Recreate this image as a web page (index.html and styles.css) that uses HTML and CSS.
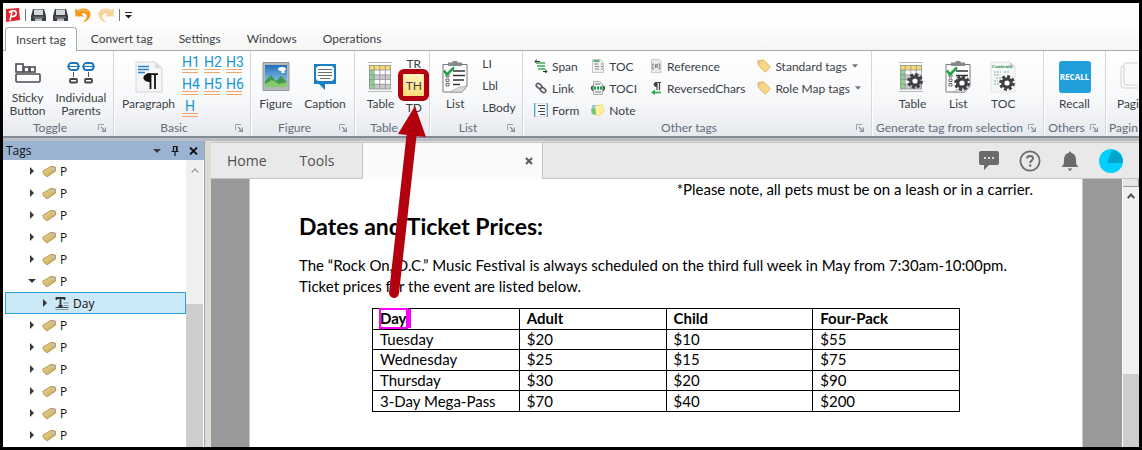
FILE: index.html
```
<!DOCTYPE html>
<html lang="en">
<head>
  <meta charset="UTF-8" />
  <meta name="viewport" content="width=device-width, initial-scale=1.0"/>
  <title>Tags</title>
  <link rel="stylesheet" href="styles.css">
</head>
<body>
  <!-- shared icons -->
  <svg class="defs" aria-hidden="true">
    <linearGradient id="goldFill" x1="0" y1="0" x2="1" y2="1">
      <stop offset="0" stop-color="#ecd79a"/><stop offset="1" stop-color="#c9a54c"/>
    </linearGradient>
    <linearGradient id="skyFill" x1="0" y1="0" x2="0" y2="1">
      <stop offset="0" stop-color="#1e6fb8"/><stop offset="1" stop-color="#a8dcf0"/>
    </linearGradient>
    <symbol id="launcher" viewBox="0 0 8 8">
      <path d="M.5 6V.5H6" fill="none" stroke="#9aa0a8"/>
      <path d="M3 3l4 4M7.5 3.5v4h-4" fill="none" stroke="#8a9098" stroke-width="1.3"/>
    </symbol>
    <symbol id="save" viewBox="0 0 15 14">
      <path d="M2 1h11l2 7v5H0V8z" fill="#3a3d40"/>
      <path d="M3 1.500h9V7H3z" fill="#d4d8dc"/>
      <path d="M2 8.500h11v1.500H2z" fill="#6b7074"/>
      <path d="M4 10.500h7V13H4z" fill="#b9bdc1"/>
    </symbol>
    <symbol id="undo" viewBox="0 0 16 15">
      <path d="M0 .5l2.500 1.700C6-.3 11-.2 14 2.500c4 5-.5 11-6.500 12 3.500-3 5.500-5.500 3.500-8C9.500 5 8 5 6.500 6L9 8.500H.5z" fill="#f39a1d"/>
      <path d="M3 3.500C6 1.500 10 1.500 12.500 4" fill="none" stroke="#fbc46a"/>
    </symbol>
    <symbol id="tag" viewBox="0 0 16 13">
      <path d="M.8 6.200L9.500 1l4.500.8.5 4.200-9 6.200L1.800 9.500z" fill="url(#goldFill)" stroke="#a3823c" stroke-width=".8"/>
      <circle cx="12" cy="3.800" r="1.300" fill="#fff" stroke="#777" stroke-width=".5"/>
      <path d="M12.200 3.600L15.500.5" stroke="#b5aaa5" stroke-width=".8"/>
    </symbol>
    <symbol id="tag2" viewBox="0 0 13 13">
      <path d="M.7 1.800L6 .7l6.300 6.500-4.500 5.100L1.500 6.500z" fill="#fbd785" stroke="#d9ae57" stroke-width=".8"/>
      <circle cx="3.300" cy="3.200" r="1" fill="#fff" stroke="#b88d3a" stroke-width=".5"/>
    </symbol>
    <symbol id="grid" viewBox="0 0 24 30">
      <path d="M0 .5h24M0 29.500h24" stroke="#b8babd"/>
      <path d="M1 3h22v24H1z" fill="#fff"/>
      <path d="M1 3h22v5H1z" fill="#f8da74"/>
      <path d="M1 8h5v19H1z" fill="#8fd192"/>
      <path d="M6 13h17v4H6zM6 22h17v5H6z" fill="#c8cacc"/>
      <path d="M1 3.500h22M1 8h22M1 12.800h22M1 17.500h22M1 22.300h22M1 27h22M1.500 3v24M6.200 3v24M11.800 3v24M17.300 3v24M22.500 3v24" stroke="#8f9296" fill="none" stroke-width=".8"/>
    </symbol>
    <symbol id="checklist" viewBox="0 0 26 32">
      <path d="M1 3.500h24V25l-5 6H1z" fill="#fff" stroke="#77797c"/>
      <path d="M25 25l-9 1.500L8 31h12z" fill="#d6d8da" stroke="#999" stroke-width=".6"/>
      <path d="M6 1.500h4L11 0h4l1 1.500h4V5H6z" fill="#85888c"/>
      <path d="M11 10h12M11 14.500h12M11 19h11M11 23.500h7" stroke="#33373b" stroke-width="1.400"/>
      <path d="M4 13.500h3v2.500H4zM4 18h3v2.500H4zM4 22.500h3V25H4z" fill="#fff" stroke="#444" stroke-width=".8"/>
      <path d="M2 9.500l3 4 7-7" fill="none" stroke="#24a148" stroke-width="2.600"/>
    </symbol>
    <symbol id="gear" viewBox="0 0 16 16">
      <circle cx="8" cy="8" r="6.600" fill="none" stroke="#3d3f42" stroke-width="2.600" stroke-dasharray="3 2.180"/>
      <circle cx="8" cy="8" r="4.200" fill="#fff" stroke="#3d3f42" stroke-width="3.200"/>
    </symbol>
    <symbol id="caret" viewBox="0 0 7 4"><path d="M0 0h7L3.500 4z" fill="#6f747a"/></symbol>
    <symbol id="right" viewBox="0 0 4 8"><path d="M0 0l4 4-4 4z" fill="#3a3a3a"/></symbol>
    <symbol id="down" viewBox="0 0 8 4"><path d="M0 0h8L4 4z" fill="#3a3a3a"/></symbol>
  </svg>

  <div class="window">
    <div class="titlebar">
      <svg class="logo" width="15" height="14" viewBox="0 0 15 14">
        <path d="M1 1l13-1 1 12-14 2z" fill="#e3212e"/>
        <path d="M5 12.500L7 3.500M4 4.500C8 1 12.500 3 11 6.500 10 8.500 7.500 9 6 8" fill="none" stroke="#fff" stroke-width="1.700"/>
      </svg>
      <span class="bar"></span>
      <button aria-label="Save"><svg width="15" height="14"><use href="#save"/></svg></button>
      <button aria-label="Save as"><svg width="15" height="14"><use href="#save"/></svg></button>
      <button aria-label="Undo"><svg width="16" height="15"><use href="#undo"/></svg></button>
      <button aria-label="Redo" class="redo" disabled><svg width="16" height="15"><use href="#undo"/></svg></button>
      <span class="bar"></span>
      <button class="more" aria-label="Customize"><svg width="7" height="7" viewBox="0 0 7 7"><path d="M0 .5h7" stroke="#222"/><path d="M0 3h7L3.500 6.500z" fill="#222"/></svg></button>
    </div>

    <div class="tabs" role="tablist">
      <button class="tab active" role="tab">Insert tag</button>
      <button class="tab" role="tab">Convert tag</button>
      <button class="tab" role="tab">Settings</button>
      <button class="tab" role="tab">Windows</button>
      <button class="tab" role="tab">Operations</button>
    </div>

    <div class="ribbon">
      <section class="group toggle">
        <div class="items">
          <button class="big two">
            <svg width="26" height="20" viewBox="0 0 26 20" fill="#fff" stroke="#4a4d51" stroke-width="1.600"><rect x="1" y="1" width="7" height="8"/><rect x="9" y="4" width="5" height="5"/><rect x="15" y="4" width="5" height="5"/><rect x="1" y="11" width="24" height="8" rx="1"/></svg>
            Sticky<br>Button
          </button>
          <button class="big two">
            <svg width="28" height="22" viewBox="0 0 28 22" fill="#fff" stroke-width="1.800"><rect x="1.500" y="1" width="10" height="7" rx="3" stroke="#1a74be"/><rect x="16.500" y="1" width="10" height="7" rx="3" stroke="#1a74be"/><path d="M0 4.500h13M15 4.500h13" stroke="#1a74be" stroke-width="1.200"/><path d="M6.500 10v5M21.500 10v5" stroke="#555" stroke-width="1"/><rect x="3" y="17" width="7" height="3.500" rx="1" stroke="#444"/><rect x="18" y="17" width="7" height="3.500" rx="1" stroke="#444"/></svg>
            Individual<br>Parents
          </button>
        </div>
        <div class="caption">Toggle<svg class="launch"><use href="#launcher"/></svg></div>
      </section>

      <section class="group basic">
        <div class="items">
          <button class="big">
            <svg width="28" height="32" viewBox="0 0 28 32"><path d="M1 1h19l7 6v24H1z" fill="#f4f5f6" stroke="#d3d5d8"/><path d="M20 1v6h7z" fill="#dcdfe2"/><path d="M3 5.500h11M3 8.500h11M3 11.500h7" stroke="#2a86cc" stroke-width="1.500"/><path d="M12 13.200h11M15.500 13v15M20 13v15" stroke="#111" stroke-width="1.800"/><path d="M15.500 12.500v8.500C6 21 6 12.500 15.500 12.500z" fill="#111"/></svg>
            Paragraph
          </button>
          <div class="headings">
            <button>H1</button><button>H2</button><button>H3</button>
            <button>H4</button><button>H5</button><button>H6</button>
            <button>H</button>
          </div>
        </div>
        <div class="caption">Basic<svg class="launch"><use href="#launcher"/></svg></div>
      </section>

      <section class="group figure">
        <div class="items">
          <button class="big">
            <svg width="28" height="32" viewBox="0 0 28 32"><path d="M1 1.500h26v28H1z" fill="#b4b8bc" stroke="#96999c"/><path d="M3 4h22v22H3z" fill="url(#skyFill)"/><path d="M3 20l6-6 5 6 5-5 6 6v5H3z" fill="#3f9a4d"/><path d="M3 23l7-4 7 4 8-2v5H3z" fill="#83ca68"/><ellipse cx="20" cy="8" rx="4" ry="2" fill="#fff"/><ellipse cx="21" cy="11" rx="2" ry="1" fill="#fff"/></svg>
            Figure
          </button>
          <button class="big">
            <svg width="24" height="32" viewBox="0 0 24 32"><path d="M1 3h22v20H12v6l-6-6H1z" fill="#1a80c3"/><path d="M5 5h14l2 2v11l-2 2H5l-2-2V7z" fill="#fff"/><path d="M5 8.500h14M5 11.500h14M5 14.500h14M7 17.500h10" stroke="#6a6e72" stroke-width="1.200"/></svg>
            Caption
          </button>
        </div>
        <div class="caption">Figure<svg class="launch"><use href="#launcher"/></svg></div>
      </section>

      <section class="group table">
        <div class="items">
          <button class="big"><svg width="24" height="32"><use href="#grid"/></svg>Table</button>
          <div class="stack">
            <button>TR</button>
            <button class="selected">TH</button>
            <button>TD</button>
          </div>
        </div>
        <div class="caption">Table<svg class="launch"><use href="#launcher"/></svg></div>
      </section>

      <section class="group list">
        <div class="items">
          <button class="big"><svg width="26" height="32"><use href="#checklist"/></svg>List</button>
          <div class="stack">
            <button>LI</button>
            <button>Lbl</button>
            <button>LBody</button>
          </div>
        </div>
        <div class="caption">List<svg class="launch"><use href="#launcher"/></svg></div>
      </section>

      <section class="group other">
        <div class="items">
          <div class="rows">
            <button><svg width="14" height="14" viewBox="0 0 14 14"><path d="M3 4h8M3 7h8M4 10h7" stroke="#35ad5a" stroke-width="1.400"/><path d="M1 2.500h5M9 12.500h4M3 .5L.8 2.500 3 4.500M11 10.500l2.200 2-2.200 1.500" stroke="#333" fill="none"/></svg>Span</button>
            <button><svg width="14" height="14" viewBox="0 0 14 14" fill="none" stroke="#55595d" stroke-width="1.500"><rect x="2" y="3" width="6" height="4" rx="2" transform="rotate(40 5 5)"/><rect x="6" y="7" width="6" height="4" rx="2" transform="rotate(40 9 9)"/></svg>Link</button>
            <button><svg width="14" height="14" viewBox="0 0 14 14"><path d="M.8 0v14M13.200 0v14" stroke="#3b9ddd" stroke-width="1.400"/><path d="M1.500 .5h11v13h-11z" fill="#fff" stroke="#c6d2dc" stroke-width=".6"/><path d="M4 2.500h7M6 5.500h5M4 8.500h7M6 11.500h5" stroke="#444"/></svg>Form</button>
          </div>
          <div class="rows">
            <button><svg width="14" height="14" viewBox="0 0 14 14"><path d="M1.500.5h8l3 3v10h-11z" fill="#eef0f0" stroke="#c5c8ca"/><path d="M2.500 2h6" stroke="#259748" stroke-width="1.500"/><path d="M3 5h4M4 7.500h4M4 10h4M10 5h2M10 7.500h2M10 10h2" stroke="#888"/></svg>TOC</button>
            <button><svg width="14" height="14" viewBox="0 0 14 14"><path d="M2.500.5h6l3 3v10h-9z" fill="#eef0f0" stroke="#aaadb0"/><path d="M4 3h5M4 11h6" stroke="#777"/><path d="M0 7h14" stroke="#259748" stroke-width="3" stroke-dasharray="2 1"/><path d="M2 4.500L0 7l2 3M12 4.500L14 7l-2 3" stroke="#333" fill="none"/></svg>TOCI</button>
            <button><svg width="14" height="14" viewBox="0 0 14 14"><path d="M1 2h5l1 1.500h5L10.500 11H.5z" fill="#8ccbed"/><path d="M4 3l7-1.500 2 7-5 4-3-.5z" fill="#fff0a0" stroke="#e5ce62" stroke-width=".6"/><path d="M0 6l4-1 1 7-4-1z" fill="#77c56f"/></svg>Note</button>
          </div>
          <div class="rows">
            <button><svg width="14" height="14" viewBox="0 0 14 14"><path d="M2.500.5h8l1.500 2v11H2.500z" fill="#e9eaeb" stroke="#c9cbcd"/><path d="M5 5H3.800v5H5M9.500 5h1.200v5H9.500M6.500 9V5.500h1.800V9M6.500 7.500h1.800" fill="none" stroke="#777" stroke-width=".9"/></svg>Reference</button>
            <button><svg width="14" height="14" viewBox="0 0 14 14"><path d="M6 1.500h6M8 1v8M10.500 1v8" stroke="#444" stroke-width="1.200"/><path d="M8 1v5C3.500 6 3.500 1 8 1z" fill="#444"/><path d="M12 11.500H4" stroke="#2aa84a" stroke-width="1.600"/><path d="M6 8.500v5.500L2 11.500z" fill="#2aa84a"/></svg>ReversedChars</button>
          </div>
          <div class="rows">
            <button><svg width="14" height="14"><use href="#tag2"/></svg>Standard tags<svg class="caret"><use href="#caret"/></svg></button>
            <button><svg width="14" height="14"><use href="#tag2"/></svg>Role Map tags<svg class="caret"><use href="#caret"/></svg></button>
          </div>
        </div>
        <div class="caption">Other tags<svg class="launch"><use href="#launcher"/></svg></div>
      </section>

      <section class="group generate">
        <div class="items">
          <button class="big"><svg width="26" height="32" viewBox="0 0 26 32"><use href="#grid" width="24" height="30" y="1"/><use href="#gear" x="8" y="12" width="16" height="16"/></svg>Table</button>
          <button class="big"><svg width="26" height="32" viewBox="0 0 26 32"><use href="#checklist" width="26" height="32"/><use href="#gear" x="9" y="14" width="16" height="16"/></svg>List</button>
          <button class="big"><svg width="26" height="32" viewBox="0 0 26 32"><path d="M1 1h19l5 5v25H1z" fill="#f6f7f7" stroke="#e0e2e3"/><path d="M20 1v5h5z" fill="#ccc"/><text x="2" y="7" class="mini">Contents</text><path d="M4 11h7M4 14h5M6 17h5M4 20h4M4 23h5M14 11h6" stroke="#7fb594" stroke-dasharray="2 1"/><use href="#gear" x="9" y="14" width="16" height="16"/></svg>TOC</button>
        </div>
        <div class="caption">Generate tag from selection<svg class="launch"><use href="#launcher"/></svg></div>
      </section>

      <section class="group others">
        <div class="items">
          <button class="big"><span class="recall">RECALL</span>Recall</button>
        </div>
        <div class="caption">Others<svg class="launch"><use href="#launcher"/></svg></div>
      </section>

      <section class="group pagination">
        <div class="items">
          <button class="big"><svg width="20" height="32" viewBox="0 0 20 32" fill="#fafafa" stroke="#cfd1d4"><rect x="3" y="5" width="20" height="22" rx="2"/><rect x="6" y="2" width="20" height="22" rx="2"/></svg>Pagi</button>
        </div>
        <div class="caption">Pagin</div>
      </section>
    </div>

    <div class="workspace">
      <aside class="panel">
        <div class="panel-head">
          <span>Tags</span>
          <button aria-label="Menu"><svg width="8" height="4"><use href="#down"/></svg></button>
          <button aria-label="Pin"><svg width="8" height="10" viewBox="0 0 8 10"><path d="M2.500.5h3.500v5H2.500zM.5 5.500h7M4 6v4M5.500 1v4" fill="none" stroke="#111" stroke-width="1.200"/></svg></button>
          <button aria-label="Close"><svg width="9" height="8" viewBox="0 0 9 8"><path d="M1 .5l7 7M8 .5l-7 7" stroke="#111" stroke-width="1.800"/></svg></button>
        </div>
        <div class="panel-body">
          <ul class="tree">
            <li><svg class="arrow"><use href="#right"/></svg><svg class="tag"><use href="#tag"/></svg>P</li>
            <li><svg class="arrow"><use href="#right"/></svg><svg class="tag"><use href="#tag"/></svg>P</li>
            <li><svg class="arrow"><use href="#right"/></svg><svg class="tag"><use href="#tag"/></svg>P</li>
            <li><svg class="arrow"><use href="#right"/></svg><svg class="tag"><use href="#tag"/></svg>P</li>
            <li><svg class="arrow"><use href="#right"/></svg><svg class="tag"><use href="#tag"/></svg>P</li>
            <li><svg class="arrow"><use href="#down"/></svg><svg class="tag"><use href="#tag"/></svg>P</li>
            <li class="current"><svg class="arrow"><use href="#right"/></svg><svg class="tag" viewBox="0 0 14 13"><path d="M1 3V1h8v2M5 1v8M3 9h4" stroke="#333" stroke-width="1.800" fill="none"/><path d="M8 6h5M8 8.500h5" stroke="#8a9aa2"/><path d="M0 10.500h13" stroke="#444"/><path d="M0 12.500h13" stroke="#8a9aa2"/></svg>Day</li>
            <li><svg class="arrow"><use href="#right"/></svg><svg class="tag"><use href="#tag"/></svg>P</li>
            <li><svg class="arrow"><use href="#right"/></svg><svg class="tag"><use href="#tag"/></svg>P</li>
            <li><svg class="arrow"><use href="#right"/></svg><svg class="tag"><use href="#tag"/></svg>P</li>
            <li><svg class="arrow"><use href="#right"/></svg><svg class="tag"><use href="#tag"/></svg>P</li>
            <li><svg class="arrow"><use href="#right"/></svg><svg class="tag"><use href="#tag"/></svg>P</li>
            <li><svg class="arrow"><use href="#right"/></svg><svg class="tag"><use href="#tag"/></svg>P</li>
          </ul>
          <div class="scroll">
            <svg width="8" height="5" viewBox="0 0 8 5"><path d="M.7 4.500L4 1l3.300 3.500" fill="none" stroke="#a0a0a0" stroke-width="1.300"/></svg>
            <div class="thumb"></div>
          </div>
        </div>
      </aside>

      <main class="viewer">
        <div class="doc-tabs">
          <button>Home</button>
          <button>Tools</button>
          <div class="doc-tab">
            <button aria-label="Close tab"><svg width="8" height="8" viewBox="0 0 8 8"><path d="M1 1l6 6M7 1L1 7" stroke="#5a5a5a" stroke-width="2"/></svg></button>
          </div>
          <div class="actions">
            <button aria-label="Comments"><svg width="20" height="21" viewBox="0 0 20 21"><path d="M2 1h16q2 0 2 2v10q0 2-2 2H10l-5 5v-5H2q-2 0-2-2V3q0-2 2-2z" fill="#6b6b6b"/><path d="M5 8h2M9 8h2M13 8h2" stroke="#fff" stroke-width="1.600"/></svg></button>
            <button aria-label="Help"><svg width="22" height="22" viewBox="0 0 22 22" fill="none" stroke="#6b6b6b" stroke-width="1.800"><circle cx="11" cy="11" r="9.600"/><path d="M8 8.500c.3-3.500 6-3.300 6-.2 0 2.200-2.800 2.200-2.800 4.700" stroke-width="2"/><path d="M10.100 15.500h2.200" stroke-width="2.200"/></svg></button>
            <button aria-label="Notifications"><svg width="18" height="20" viewBox="0 0 18 20"><path d="M9 0l1.500 2C14 3 15 6 15 9c0 4 .5 5 2.500 7H.5C2.500 14 3 13 3 9c0-3 1-6 4.500-7zM6.500 17.500h5L9 20z" fill="#6b6b6b"/></svg></button>
            <button aria-label="Account"><svg width="24" height="24" viewBox="0 0 24 24"><circle cx="12" cy="12" r="12" fill="#00cfff"/><path d="M13 1c7 1 11 6 11 13H8z" fill="#00a4cc"/></svg></button>
          </div>
        </div>
        <div class="canvas">
          <article class="page">
            <p class="note">*Please note, all pets must be on a leash or in a carrier.</p>
            <h2>Dates and Ticket Prices:</h2>
            <p>The “Rock On, D.C.” Music Festival is always scheduled on the third full week in May from 7:30am-10:00pm. Ticket prices for the event are listed below.</p>
            <table>
              <tr><th><span class="mark">Day</span></th><th>Adult</th><th>Child</th><th>Four-Pack</th></tr>
              <tr><td>Tuesday</td><td>$20</td><td>$10</td><td>$55</td></tr>
              <tr><td>Wednesday</td><td>$25</td><td>$15</td><td>$75</td></tr>
              <tr><td>Thursday</td><td>$30</td><td>$20</td><td>$90</td></tr>
              <tr><td>3-Day Mega-Pass</td><td>$70</td><td>$40</td><td>$200</td></tr>
            </table>
          </article>
          <div class="scroll doc-scroll">
            <div class="split"></div>
            <svg width="8" height="6" viewBox="0 0 8 6"><path d="M.7 5.200L4 1.500l3.300 3.700" fill="none" stroke="#505050" stroke-width="2"/></svg>
            <div class="thumb"></div>
          </div>
        </div>
      </main>
    </div>

    <!-- pointer from the Day cell to the TH button -->
    <svg class="pointer" width="40" height="196" viewBox="0 0 40 196" aria-hidden="true">
      <path d="M7 187L25 25" stroke="#b3000f" stroke-width="10" stroke-linecap="round"/>
      <path d="M28 0L11 28l28 3z" fill="#b3000f"/>
    </svg>
  </div>
</body>
</html>
```
FILE: styles.css
```
* {
  box-sizing: border-box;
}
body {
  margin: 0;
  font-family: 'Open Sans', 'Segoe UI', sans-serif;
  font-size: 12px;
  color: #3b3f46;
}
button {
  padding: 0;
  border: none;
  background: none;
  font: inherit;
  color: inherit;
  cursor: pointer;
}
svg {
  display: block;
  flex: none;
}
.defs {
  position: absolute;
  width: 0;
  height: 0;
}
.window {
  position: relative;
  display: flex;
  flex-direction: column;
  height: 100vh;
  border: 3px solid #000;
  overflow: hidden;
}

/* title bar */
.titlebar {
  display: flex;
  align-items: center;
  gap: 7px;
  height: 24px;
  padding: 0 2px;
  background: #fefefe;
}
.titlebar .bar {
  width: 1px;
  height: 12px;
  margin: 0 -2px 0 -2px;
  background: #777;
}
.redo {
  opacity: 0.45;
  transform: scaleX(-1);
}
.tabs {
  display: flex;
  height: 24px;
  padding-left: 2px;
  background: linear-gradient(#fdfdfd, #f5f5f3);
  border-bottom: 1px solid #a4abb5;
  font-family: Lato, 'Open Sans', sans-serif;
}
.tab {
  padding: 0 13px;
  font-size: 12px;
}
.tab.active {
  height: 24px;
  margin-right: 1px;
  padding: 0 10px;
  background: #fff;
  border: 1px solid #a4abb5;
  border-bottom: none;
  border-radius: 4px 4px 0 0;
}

/* ribbon */
.ribbon {
  display: flex;
  flex: none;
  height: 90px;
  background: linear-gradient(#fff 0, #f7f8fa 50px, #e6e9ee 85px, #858b94 85px, #858b94 87px, #b9bdc7 87px);
  overflow: hidden;
  font-family: Lato, 'Open Sans', sans-serif;
}
.group {
  flex: none;
  display: flex;
  flex-direction: column;
  height: 85px;
  border-right: 1px solid #d5d8dd;
  box-shadow: 1px 0 0 #fff;
}
.items {
  flex: 1;
  display: flex;
  justify-content: center;
}
.caption {
  position: relative;
  height: 15px;
  padding-right: 16px;
  text-align: center;
  line-height: 14px;
  color: #646c7a;
  white-space: nowrap;
}
.launch {
  position: absolute;
  right: 7px;
  top: 3px;
  width: 8px;
  height: 8px;
}
.big {
  display: flex;
  flex-direction: column;
  align-items: center;
  justify-content: flex-start;
  gap: 4px;
  padding-top: 10px;
  line-height: 13px;
}
.big.two {
  display: block;
  padding-top: 7px;
}
.big.two svg {
  height: 22px;
  margin: 0 auto 7px;
}
.toggle { width: 111px; }
.basic { width: 137px; }
.figure { width: 104px; }
.table { width: 75px; }
.list { width: 93px; }
.other { width: 349px; }
.generate { width: 172px; }
.others { width: 62px; }
.pagination { flex: 1; border: none; }
.toggle .items { gap: 10px; }
.basic .items { gap: 7px; }
.figure .items { gap: 12px; }
.table .items { gap: 9px; padding-left: 7px; }
.list .items { gap: 14px; padding-left: 6px; }
.generate .items { gap: 19px; }
.pagination .items { justify-content: flex-end; }
.pagination .caption { padding: 0 0 0 2px; }

.headings {
  display: grid;
  grid-template-columns: repeat(3, 16px);
  grid-auto-rows: 18px;
  gap: 4px 6px;
  padding-top: 4px;
}
.headings button {
  border-bottom: 4px double #f5a56c;
  font: 14px/14px Roboto, sans-serif;
  color: #1499cf;
}
.stack {
  display: flex;
  flex-direction: column;
  padding-top: 1px;
}
.stack button {
  height: 22px;
  text-align: left;
}
.table .stack button {
  width: 21px;
  text-align: center;
}
.stack .selected {
  background: linear-gradient(#fff3bd, #fbdc78);
  outline: 5px solid #b3000f;
  border-radius: 1px;
}
.other .items {
  justify-content: flex-start;
  gap: 12px;
  padding: 4px 0 0 11px;
}
.rows button {
  display: flex;
  align-items: center;
  gap: 4px;
  height: 22px;
  white-space: nowrap;
}
.caret {
  width: 6px;
  height: 4px;
  margin-left: 1px;
}
.mini {
  font: bold 4px 'DejaVu Serif', serif;
  fill: #1d8a45;
}
.recall {
  width: 32px;
  height: 32px;
  border-radius: 3px;
  background: #219fda;
  color: #fff;
  font: bold 8px/32px 'Open Sans', sans-serif;
}

/* workspace */
.workspace {
  flex: 1;
  display: flex;
  min-height: 0;
  background: #dedbd3;
}
.panel {
  flex: none;
  display: flex;
  flex-direction: column;
  width: 202px;
  margin-right: 6px;
  border-right: 1px solid #a0a5ad;
  background: #fff;
  color: #111;
}
.panel-head {
  display: flex;
  align-items: center;
  gap: 10px;
  height: 19px;
  padding: 0 6px 0 3px;
  background: #9ab3d1;
}
.panel-head span {
  margin-right: auto;
}
.panel-body {
  flex: 1;
  display: flex;
  min-height: 0;
  padding-right: 1px;
}
.tree {
  flex: 1;
  margin: 0;
  padding: 0 0 0 2px;
  list-style: none;
  overflow: hidden;
}
.tree li {
  display: flex;
  align-items: center;
  height: 22px;
  padding-left: 23px;
}
.tree .arrow {
  width: 8px;
  height: 8px;
  margin-right: 6px;
}
.tree .tag {
  width: 15px;
  height: 13px;
  margin-right: 3px;
}
.tree .current {
  padding-left: 35px;
  border: 1px solid #2aa3da;
  background: #cbe8f6;
}
.scroll {
  display: flex;
  flex-direction: column;
  align-items: center;
  width: 17px;
  padding-top: 8px;
  background: #f0f0f0;
}
.scroll .thumb {
  width: 100%;
  height: 143px;
  margin-top: auto;
  background: #cdcdcd;
}
.viewer {
  flex: 1;
  display: flex;
  flex-direction: column;
  min-width: 0;
}
.doc-tabs {
  display: flex;
  gap: 3px;
  height: 37px;
  margin-top: 1px;
  border-top: 1px solid #c8c8c8;
  border-bottom: 1px solid #c4c4c4;
  background: #e9e9e9;
  font-size: 14px;
  color: #505050;
}
.doc-tabs > button {
  padding: 0 14px 0 16px;
}
.doc-tab {
  display: flex;
  justify-content: flex-end;
  width: 181px;
  height: 36px;
  margin-left: 11px;
  padding-right: 9px;
  border: solid #c4c4c4;
  border-width: 0 1px;
  background: #fafafa;
}
.actions {
  display: flex;
  align-items: center;
  gap: 20px;
  margin-left: auto;
  padding-right: 16px;
}
.canvas {
  flex: 1;
  display: flex;
  min-height: 0;
  background: #999;
}
.page {
  flex: 1;
  margin: 0 39px 0 38px;
  padding: 0 49px;
  border: solid #c8c8c8;
  border-width: 0 1px;
  background: #fff;
  color: #000;
  font: 15px/21px Lato, Calibri, sans-serif;
}
.page p {
  margin: 0;
}
.page .note {
  text-align: right;
}
.page h2 {
  margin: 11px 0 13px;
  font-size: 23px;
  line-height: 31px;
}
.page table {
  width: 588px;
  height: 104px;
  margin: 11px 0 0 73px;
  border-collapse: collapse;
  table-layout: fixed;
  line-height: 19px;
}
.page th,
.page td {
  padding: 0 7px;
  border: 1px solid #000;
  text-align: left;
}
.mark {
  display: inline-block;
  outline: 2px solid #f0f;
  outline-offset: -1px;
  box-shadow: 4px 0 0 #f0f;
}
.doc-scroll {
  padding-top: 0;
  border-left: 1px solid #fff;
}
.doc-scroll .split {
  width: 100%;
  height: 8px;
  margin-bottom: 6px;
  border: 1px solid #999;
  border-width: 0 1px 1px 0;
  background: #e6e6e6;
}
.doc-scroll .thumb {
  height: 73px;
}
.pointer {
  position: absolute;
  left: 384px;
  top: 103px;
}
```
